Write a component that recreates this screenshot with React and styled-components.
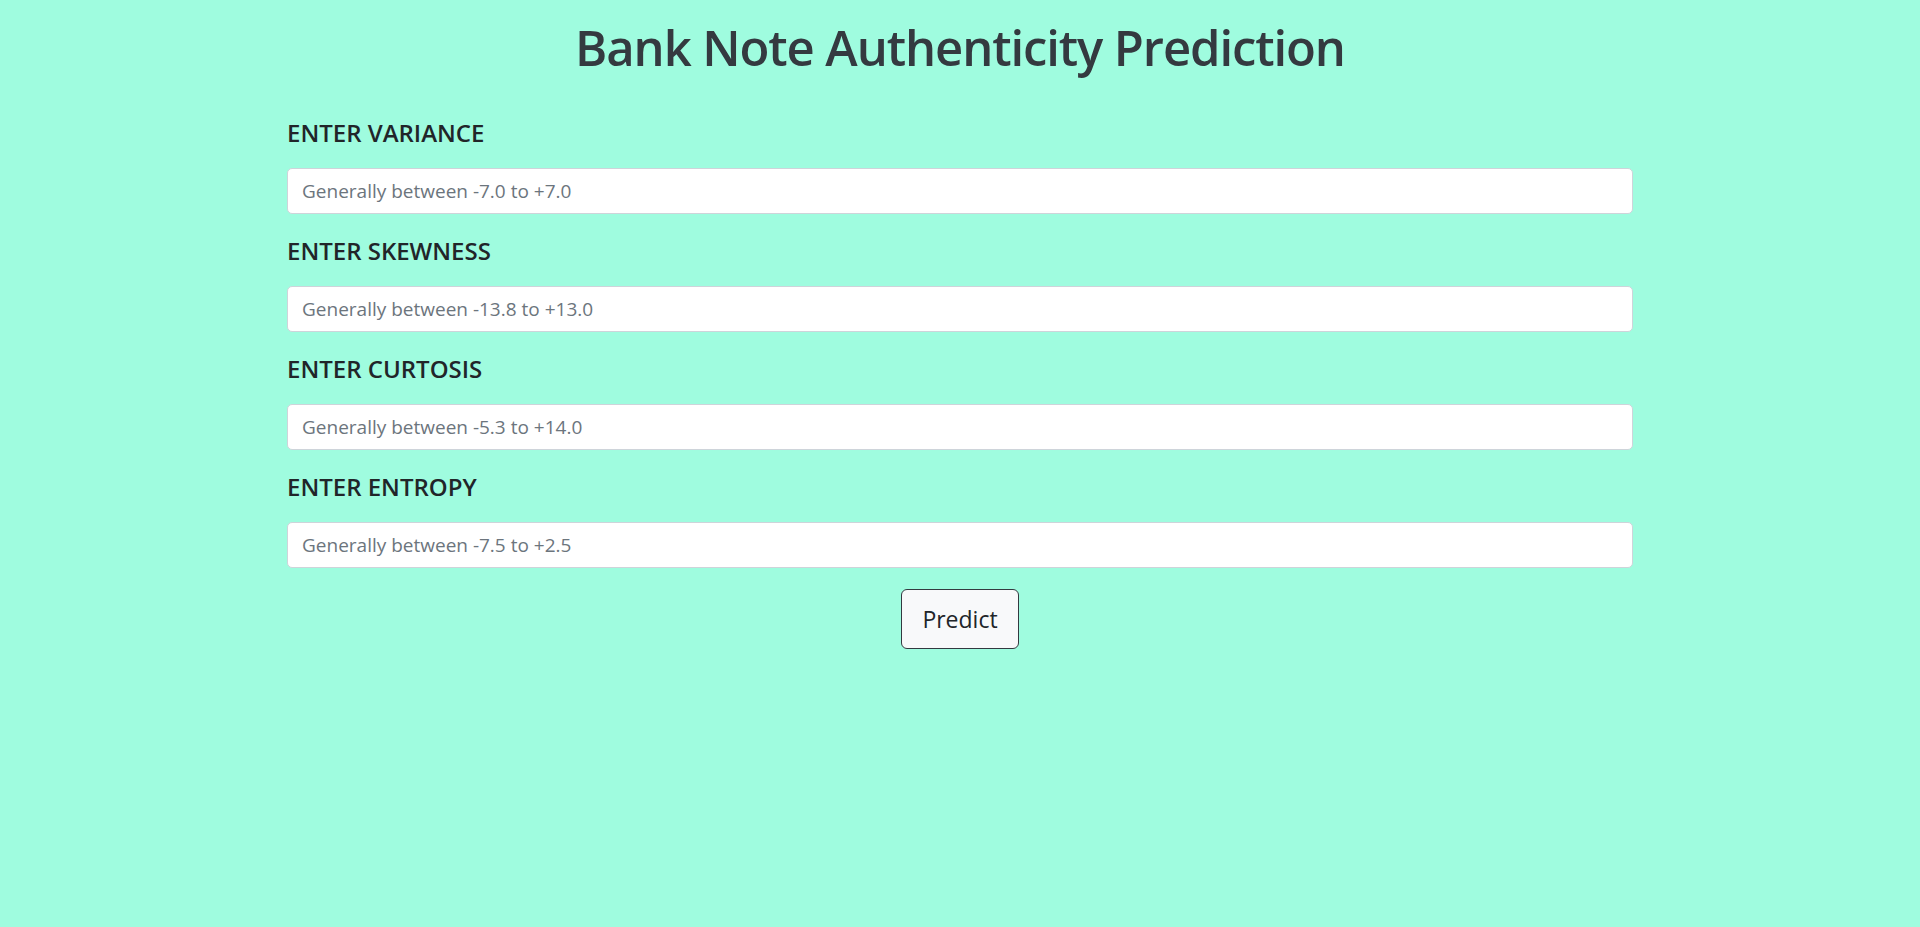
import React from "react";
import styled, { createGlobalStyle } from "styled-components";

const GlobalStyle = createGlobalStyle`
    html, body {
        margin: 0;
        padding: 0;
        background: #9ffcdf;
    }
    body {
        font-family: "Open Sans", "Noto Sans", sans-serif;
        color: #212529;
        min-height: 927px;
    }
`;

const Page = styled.main`
    display: flex;
    flex-direction: column;
    align-items: center;
    padding-top: 17px;
`;

const Title = styled.h1`
    margin: 0 0 40px;
    font-size: 49px;
    font-weight: 600;
    line-height: 61px;
    color: #343a40;
    letter-spacing: -1.1px;
`;

const Form = styled.form`
    width: 1346px;
    display: flex;
    flex-direction: column;
`;

const Field = styled.div`
    display: flex;
    flex-direction: column;
    gap: 21px;
    margin-bottom: 22px;
    &:last-of-type {
        margin-bottom: 21px;
    }
`;

const Label = styled.label`
    font-size: 24px;
    font-weight: 600;
    line-height: 29px;
    color: #212529;
`;

const Input = styled.input`
    box-sizing: border-box;
    height: 46px;
    width: 100%;
    padding: 0 14px;
    font-family: inherit;
    font-size: 19px;
    color: #212529;
    background: #fff;
    border: 1px solid #ced4da;
    border-radius: 5px;
    outline: none;
    &::placeholder {
        color: #6c757d;
    }
`;

const Button = styled.button`
    align-self: center;
    box-sizing: border-box;
    width: 118px;
    height: 60px;
    font-family: inherit;
    font-size: 23px;
    color: #212529;
    background: #f8f9fa;
    border: 1px solid #343a40;
    border-radius: 6px;
    cursor: pointer;
`;

const fields = [
    { label: "ENTER VARIANCE", hint: "Generally between -7.0 to +7.0" },
    { label: "ENTER SKEWNESS", hint: "Generally between -13.8 to +13.0" },
    { label: "ENTER CURTOSIS", hint: "Generally between -5.3 to +14.0" },
    { label: "ENTER ENTROPY", hint: "Generally between -7.5 to +2.5" },
];

const App = () => {
    return (
        <>
            <GlobalStyle />
            <Page>
                <Title>Bank Note Authenticity Prediction</Title>
                <Form onSubmit={(e) => e.preventDefault()}>
                    {fields.map((f) => (
                        <Field key={f.label}>
                            <Label>{f.label}</Label>
                            <Input type="text" placeholder={f.hint} />
                        </Field>
                    ))}
                    <Button type="submit">Predict</Button>
                </Form>
            </Page>
        </>
    );
};

export default App;
